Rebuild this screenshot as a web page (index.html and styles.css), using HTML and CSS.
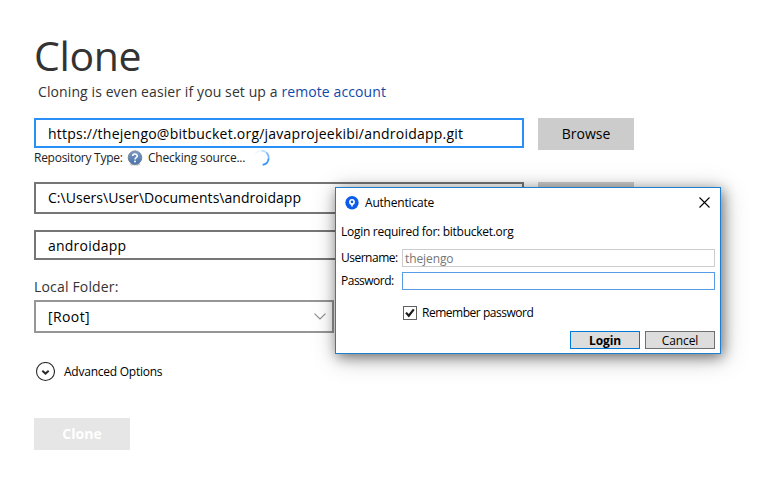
FILE: index.html
```
<!DOCTYPE html>
<html lang="en">
<head>
<meta charset="utf-8">
<title>Clone</title>
<link rel="stylesheet" href="styles.css">
</head>
<body>
<main class="page">
  <h1 class="title">Clone</h1>
  <p class="subtitle">Cloning is even easier if you set up a <a class="link">remote account</a></p>
  <div class="row source">
    <div class="field focused url">https://thejengo@bitbucket.org/javaprojeekibi/androidapp.git</div>
    <div class="btn">Browse</div>
  </div>
  <div class="status">
    <span class="repo-type">Repository Type:</span>
    <svg class="help" width="16" height="16" viewBox="0 0 16 16">
      <defs><linearGradient id="hg" x1="0" y1="0" x2="0" y2="1"><stop offset="0" stop-color="#7d9cc4"/><stop offset="1" stop-color="#4671ab"/></linearGradient></defs>
      <ellipse cx="8" cy="14.3" rx="5.5" ry="1.2" fill="#c8c8c8"/>
      <circle cx="8" cy="7.7" r="6.8" fill="url(#hg)" stroke="#6e7f96" stroke-width=".9"/>
      <path d="M5.7 6.1C5.7 3.4 10.3 3.4 10.3 6C10.3 7.6 8 7.5 8 9.4" fill="none" stroke="#fff" stroke-width="1.6"/>
      <circle cx="8" cy="11.4" r="1" fill="#fff"/>
    </svg>
    <span class="checking">Checking source...</span>
    <svg class="spinner" width="16" height="16" viewBox="0 0 16 16" fill="none">
      <path d="M1.2 3.6A7 7 0 0 1 7.4 .8" stroke="#e3f0ff" stroke-width="1"/>
      <path d="M7.4 .8A7 7 0 0 1 12.8 3" stroke="#b5d8ff" stroke-width="1.4"/>
      <path d="M12.5 2.7A7 7 0 0 1 14.5 9.2" stroke="#7ab8fd" stroke-width="1.6"/>
      <path d="M14.6 8.7A7 7 0 0 1 8.6 14.9" stroke="#3c96fa" stroke-width="1.8"/>
    </svg>
  </div>
  <div class="row destination">
    <div class="field tall path">C:\Users\User\Documents\androidapp</div>
    <div class="btn"></div>
  </div>
  <div class="field name">androidapp</div>
  <div class="folder-label">Local Folder:</div>
  <div class="select">
    <span>[Root]</span>
    <svg width="12" height="7" viewBox="0 0 12 7"><path d="M.5 .7L6 6L11.5 .7" fill="none" stroke="#8c8c8c" stroke-width="1.1"/></svg>
  </div>
  <div class="advanced">
    <svg width="20" height="20" viewBox="0 0 20 20" fill="none" stroke="#2b2b2b">
      <circle cx="10.5" cy="9.5" r="9" stroke-width="1.1"/>
      <path d="M7.3 8.8L10.5 11.6L13.7 8.8" stroke-width="2"/>
    </svg>
    <span>Advanced Options</span>
  </div>
  <div class="btn submit">Clone</div>
</main>

<section class="dialog">
  <header class="dialog-head">
    <svg width="14" height="14" viewBox="0 0 14 14">
      <circle cx="7" cy="6.7" r="6.7" fill="#0c5bea"/>
      <circle cx="7" cy="5.9" r="2.1" fill="none" stroke="#fff" stroke-width="1.6"/>
      <path d="M6.2 7.6H7.8V10.5H6.2Z" fill="#fff"/>
    </svg>
    <span class="dialog-title">Authenticate</span>
    <svg class="close" width="11" height="11" viewBox="0 0 11 11"><path d="M.5 .5L10.5 10.5M10.5 .5L.5 10.5" stroke="#000" stroke-width="1.1"/></svg>
  </header>
  <p class="message">Login required for: bitbucket.org</p>
  <div class="entry"><span class="label">Username:</span><div class="input disabled">thejengo</div></div>
  <div class="entry"><span class="label pass">Password:</span><div class="input active"></div></div>
  <div class="remember">
    <svg width="14" height="14" viewBox="0 0 14 14"><rect x=".5" y=".5" width="13" height="13" fill="#fff" stroke="#606060"/><path d="M3 6.6L5.8 9.8L10.8 3.4" fill="none" stroke="#1b1b1b" stroke-width="2.2"/></svg>
    <span>Remember password</span>
  </div>
  <div class="actions"><div class="action primary">Login</div><div class="action">Cancel</div></div>
</section>
</body>
</html>
```
FILE: styles.css
```
* { box-sizing: border-box; }
body {
  margin: 0;
  width: 767px;
  height: 477px;
  overflow: hidden;
  background: #fff;
  color: #000;
  font: 14px/20px "Open Sans", "Noto Sans", sans-serif;
  white-space: nowrap;
}
.page { padding: 26px 0 0 34px; }
.title {
  margin: 0;
  height: 56px;
  font-size: 41px;
  line-height: 58px;
  font-weight: 400;
  letter-spacing: -.4px;
  color: #333;
}
.subtitle { margin: 0 0 16px 4px; letter-spacing: .1px; color: #333; }
.link { color: #0f4aa8; }
.row { display: flex; gap: 14px; }
.source { height: 32px; }
.field {
  width: 490px;
  height: 30px;
  padding: 0 12px;
  border: 2px solid #767676;
  line-height: 27px;
  background: #fff;
}
.focused { border-color: #2a8ff7; }
.tall { height: 32px; }
.url { letter-spacing: .23px; }
.path { letter-spacing: .04px; }
.name { margin-top: 16px; letter-spacing: .22px; }
.btn {
  width: 96px;
  height: 32px;
  background: #ccc;
  line-height: 32px;
  text-align: center;
}
.status {
  display: flex;
  align-items: center;
  height: 16px;
  font-size: 12px;
  line-height: 18px;
  color: #222;
}
.repo-type { width: 93px; letter-spacing: -.26px; }
.help { margin-right: 5px; }
.checking { width: 106px; letter-spacing: -.2px; }
.destination { margin-top: 16px; }
.folder-label { margin-top: 17px; height: 23px; letter-spacing: .17px; color: #333; }
.select {
  display: flex;
  align-items: center;
  justify-content: space-between;
  width: 300px;
  height: 33px;
  padding: 0 6px 0 12px;
  border: 2px solid #969696;
  letter-spacing: .4px;
}
.advanced {
  display: flex;
  align-items: center;
  gap: 9px;
  margin: 29px 0 0 1px;
  height: 20px;
  font-size: 12px;
  letter-spacing: -.24px;
}
.submit { margin-top: 36px; background: #e6e6e6; color: #fff; font-weight: 700; }

.dialog {
  position: absolute;
  left: 335px;
  top: 187px;
  width: 386px;
  height: 167px;
  padding: 0 5px;
  border: 1px solid #1e7fd0;
  background: #fff;
  box-shadow: 2px 3px 12px rgba(0,0,0,.45), 2px 4px 24px rgba(0,0,0,.25);
  font-size: 12px;
  line-height: 18px;
}
.dialog-head {
  display: flex;
  align-items: center;
  height: 29px;
  padding: 0 5px 0 4px;
}
.dialog-title { margin-left: 6px; letter-spacing: -.2px; }
.close { margin-left: auto; }
.message { margin: 6px 0 8px; height: 18px; letter-spacing: -.28px; }
.entry { display: flex; align-items: center; height: 18px; margin-bottom: 5px; }
.label { width: 61px; flex: none; letter-spacing: -.5px; }
.input { flex: 1; height: 18px; border: 1px solid #ccc; padding-left: 2px; line-height: 18px; letter-spacing: -.1px; }
.disabled { color: #767676; }
.active { border-color: #569de5; }
.remember {
  display: flex;
  align-items: center;
  gap: 5px;
  height: 14px;
  margin: 16px 0 0 62px;
  letter-spacing: -.48px;
}
.actions { display: flex; justify-content: flex-end; gap: 5px; margin-top: 11px; }
.action {
  width: 70px;
  height: 18px;
  border: 1px solid #707070;
  background: #ddd;
  line-height: 17px;
  text-align: center;
  letter-spacing: -.1px;
}
.primary { border-color: #0078d7; font-weight: 700; }
```
